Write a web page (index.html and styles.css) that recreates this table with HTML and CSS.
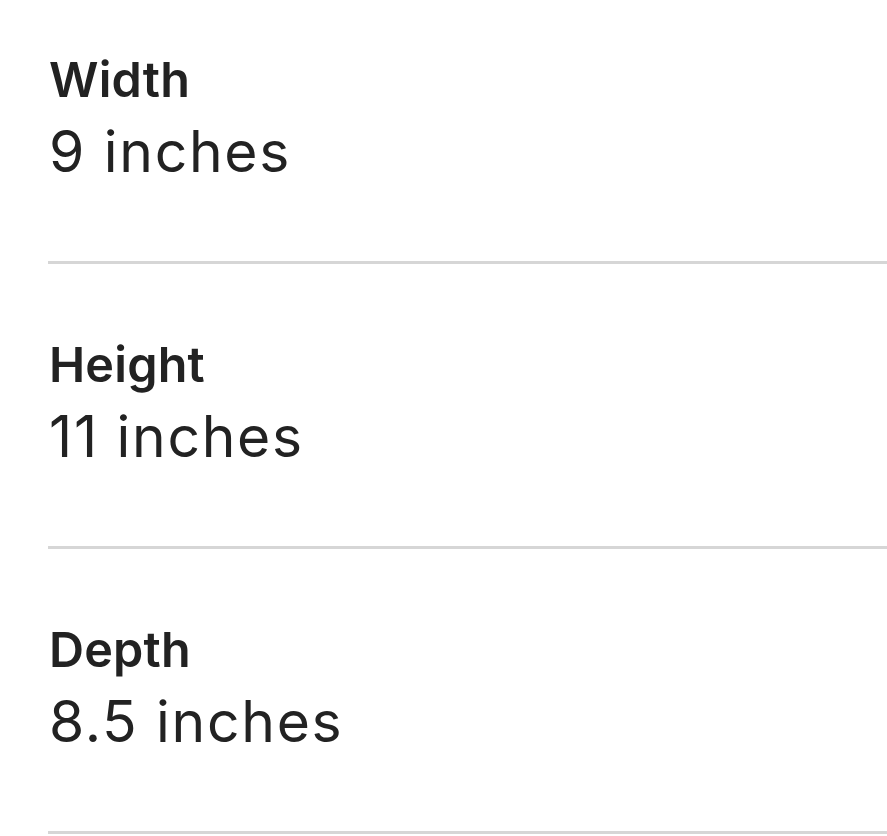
FILE: index.html
```html
<!DOCTYPE html>
<html lang="en">
<head>
<meta charset="utf-8">
<title>Dimensions</title>
<link rel="stylesheet" href="styles.css">
</head>
<body>
<div class="list">
  <div class="row first">
    <div class="label">Width</div>
    <div class="value">9 inches</div>
  </div>
  <div class="row">
    <div class="label">Height</div>
    <div class="value">11 inches</div>
  </div>
  <div class="row">
    <div class="label">Depth</div>
    <div class="value">8.5 inches</div>
  </div>
</div>
</body>
</html>
```
FILE: styles.css
```css
html, body {
  margin: 0;
  padding: 0;
  background: #ffffff;
}
body {
  font-family: Inter, "Liberation Sans", sans-serif;
  color: #222222;
}
.list {
  margin-left: 48px;
}
.row {
  padding: 71px 0 75px 1px;
  border-bottom: 3px solid #d6d6d6;
}
.row.first {
  padding-top: 50px;
}
.label {
  font-size: 48.5px;
  font-weight: 600;
  line-height: 59px;
  letter-spacing: 0.2px;
}
.value {
  font-size: 57px;
  font-weight: 400;
  line-height: 68px;
  margin-top: 9px;
  letter-spacing: 1.7px;
}
```
